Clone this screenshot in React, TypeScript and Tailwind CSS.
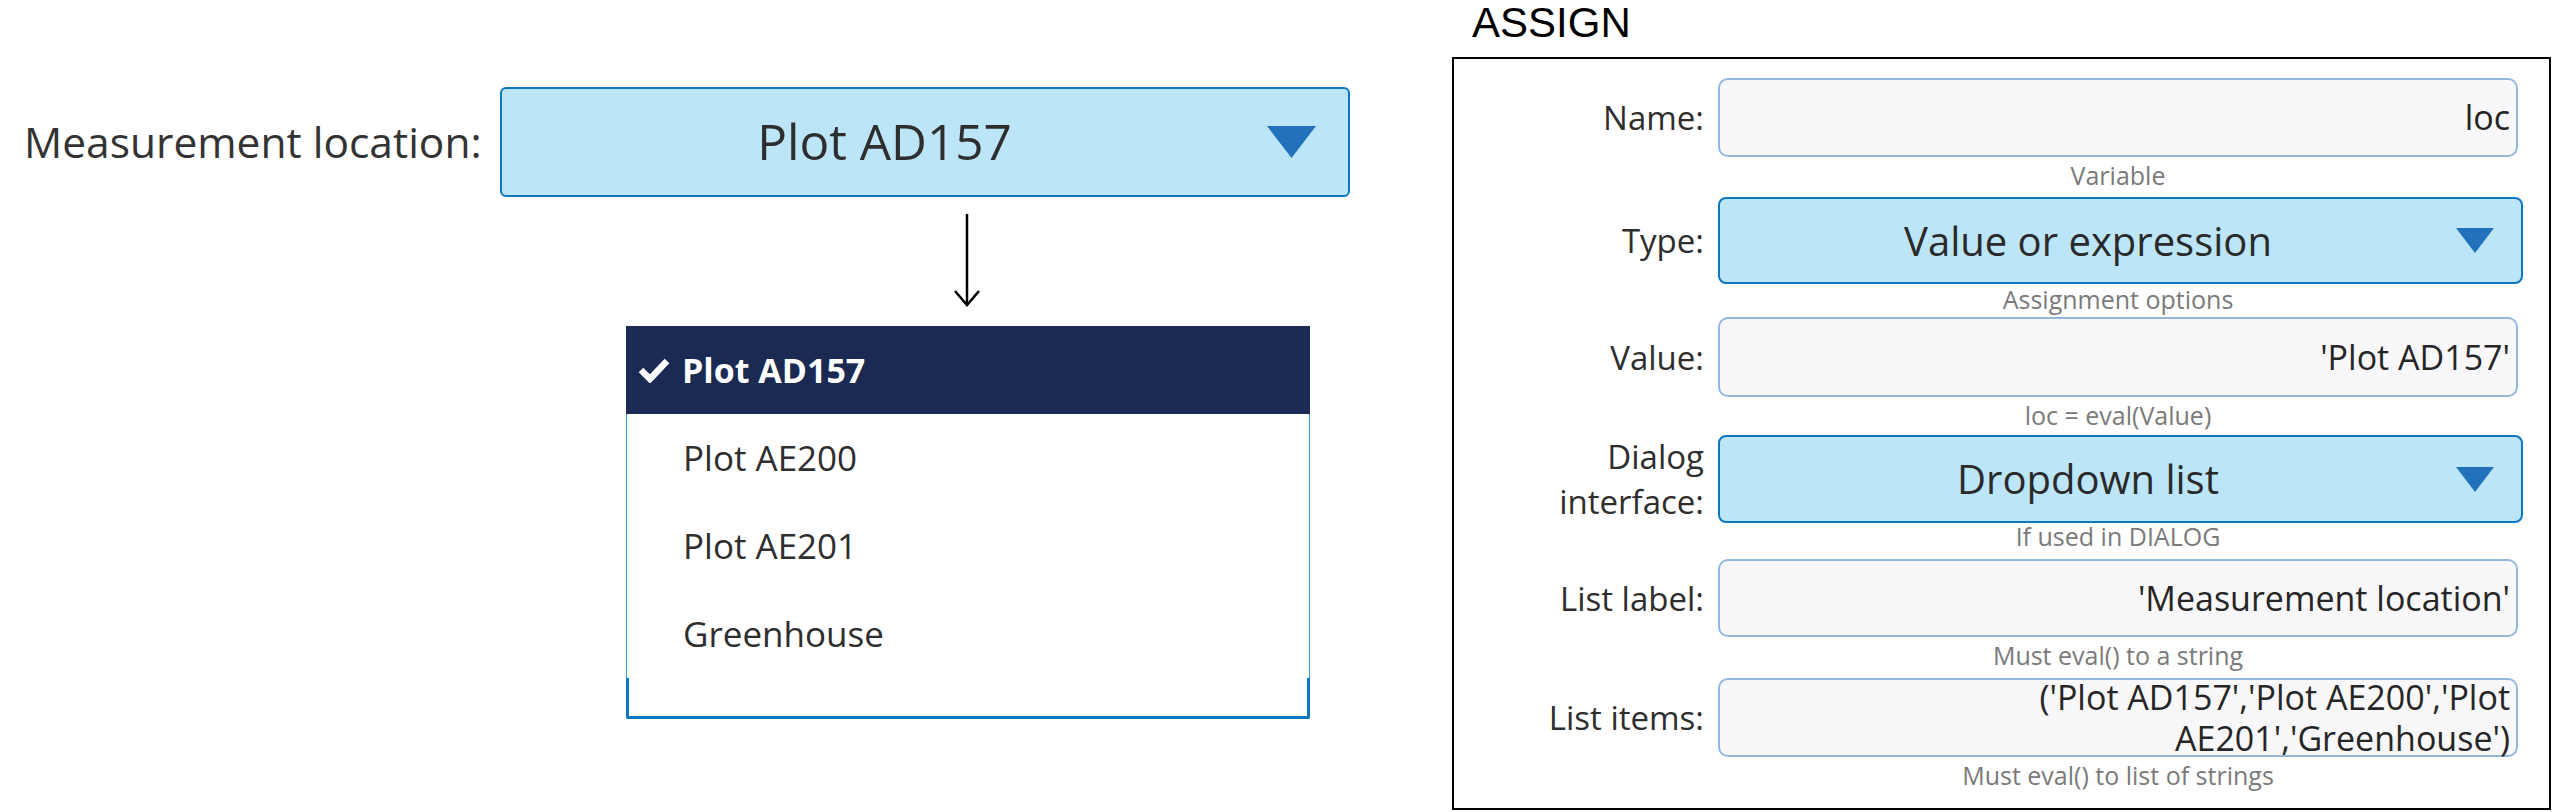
import React from "react";

const sans = { fontFamily: '"Open Sans", "Noto Sans", sans-serif' };

function Tri({ w, h }: { w: number; h: number }) {
  return (
    <svg width={w} height={h} viewBox={`0 0 ${w} ${h}`} className="shrink-0">
      <polygon points={`0,0 ${w},0 ${w / 2},${h}`} fill="#2272bb" />
    </svg>
  );
}

function TextInput({ h, children }: { h: string; children: React.ReactNode }) {
  return (
    <div
      className={`${h} w-[800px] rounded-[10px] border-2 border-[#93b8e0] bg-[#f8f8fa] flex items-center justify-end pr-[6px] text-right text-[34px] text-[#262626] leading-[41px]`}
    >
      {children}
    </div>
  );
}

function Select({ h, children }: { h: string; children: React.ReactNode }) {
  return (
    <div
      className={`${h} w-[805px] rounded-[8px] border-2 border-[#0b78c0] bg-[#bde5f8] flex items-center pr-[27px]`}
    >
      <div className="flex-1 text-center text-[40px] text-[#2a2a2a]">{children}</div>
      <Tri w={38} h={25} />
    </div>
  );
}

function Row({
  label,
  children,
}: {
  label: React.ReactNode;
  children: React.ReactNode;
}) {
  return (
    <div className="flex items-center">
      <div className="w-[250px] text-right text-[33px] leading-[45px] text-[#2e2e2e]">{label}</div>
      <div className="ml-[14px]">{children}</div>
    </div>
  );
}

function Help({ h, pt, children }: { h: string; pt: string; children: React.ReactNode }) {
  return (
    <div className={`${h} pl-[264px]`}>
      <div className={`w-[800px] text-center text-[25px] leading-[34px] text-[#7a7a7a] ${pt}`}>
        {children}
      </div>
    </div>
  );
}

export default function App() {
  return (
    <div className="w-[2552px] h-[812px] bg-white flex overflow-hidden" style={sans}>
      {/* Left demo */}
      <div className="w-[1452px] shrink-0 flex flex-col">
        <div className="mt-[87px] flex items-center">
          <div className="w-[500px] pl-[24px] text-[42.5px] text-[#333] leading-none">
            Measurement location:
          </div>
          <div className="w-[850px] h-[110px] rounded-[6px] border-2 border-[#0b78c0] bg-[#bde5f8] flex items-center pr-[32px]">
            <div className="flex-1 text-center text-[49.5px] text-[#2e2e2e] leading-none">Plot AD157</div>
            <Tri w={49} h={32} />
          </div>
        </div>
        <svg width="30" height="94" viewBox="0 0 30 94" className="mt-[17px] ml-[952px]">
          <line x1="15" y1="0" x2="15" y2="91" stroke="#000" strokeWidth="2.5" />
          <polyline points="3,77 15,91 27,77" fill="none" stroke="#000" strokeWidth="2.5" />
        </svg>
        <div className="mt-[18px] ml-[626px] w-[684px] flex flex-col border-t border-[#51627e]">
          <div className="h-[88px] bg-[#1a2a52] flex items-center pl-[12px] text-white text-[34px] font-bold -mt-px">
            <svg width="32" height="25" viewBox="0 0 32 25" className="mr-[12px]">
              <polyline points="3,12 12,21 29,3" fill="none" stroke="#fff" strokeWidth="6.5" strokeLinejoin="miter" />
            </svg>
            Plot AD157
          </div>
          <div className="border-x border-[#3b97d6] flex flex-col text-[35px] text-[#2e2e2e]">
            <div className="h-[88px] flex items-center pl-[56px]">Plot AE200</div>
            <div className="h-[88px] flex items-center pl-[56px]">Plot AE201</div>
            <div className="h-[88px] flex items-center pl-[56px]">Greenhouse</div>
          </div>
          <div className="h-[41px] border-x-[3px] border-b-[3px] border-[#0b78c0] rounded-b-[2px]" />
        </div>
      </div>

      {/* Right panel */}
      <div className="w-[1099px] shrink-0 flex flex-col">
        <div
          className="h-[57px] pl-[20px] pt-[2px] text-[42px] leading-none text-black"
          style={{ fontFamily: '"Liberation Sans", Arial, sans-serif' }}
        >
          ASSIGN
        </div>
        <div className="h-[753px] border-2 border-black pt-[19px] flex flex-col">
          <Row label="Name:">
            <TextInput h="h-[79px]">loc</TextInput>
          </Row>
          <Help h="h-[40px]" pt="pt-[1px]">Variable</Help>
          <Row label="Type:">
            <Select h="h-[87px]">Value or expression</Select>
          </Row>
          <Help h="h-[33px]" pt="-mt-[2px]">Assignment options</Help>
          <Row label="Value:">
            <TextInput h="h-[80px]">'Plot AD157'</TextInput>
          </Row>
          <Help h="h-[37px]" pt="pt-[1px]">loc = eval(Value)</Help>
          <Row
            label={
              <>
                Dialog
                <br />
                interface:
              </>
            }
          >
            <Select h="h-[88px]">Dropdown list</Select>
          </Row>
          <Help h="h-[35px]" pt="-mt-[5px]">If used in DIALOG</Help>
          <Row label="List label:">
            <TextInput h="h-[78px]">'Measurement location'</TextInput>
          </Row>
          <Help h="h-[41px]" pt="pt-[1px]">Must eval() to a string</Help>
          <Row label="List items:">
            <TextInput h="h-[79px]">
              <span>
                ('Plot AD157','Plot AE200','Plot
                <br />
                AE201','Greenhouse')
              </span>
            </TextInput>
          </Row>
          <Help h="h-[40px]" pt="pt-[1px]">Must eval() to list of strings</Help>
        </div>
      </div>
    </div>
  );
}
